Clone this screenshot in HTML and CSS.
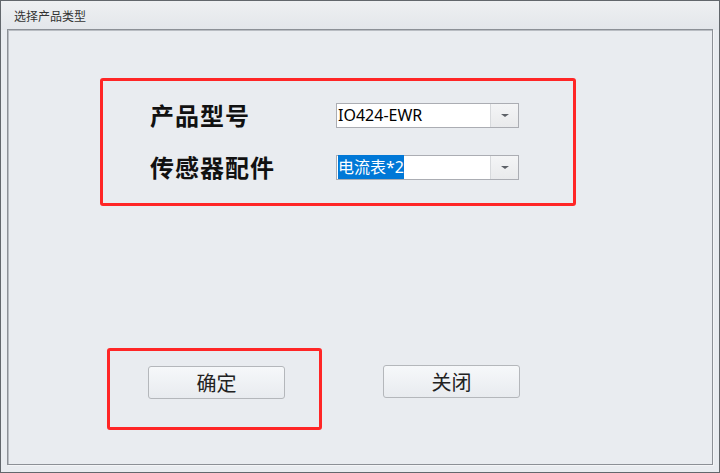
FILE: index.html
```html
<!DOCTYPE html>
<html lang="zh-CN">
<head>
    <meta charset="UTF-8">
    <meta name="viewport" content="width=device-width, initial-scale=1.0">
    <title>选择产品类型</title>
    <link rel="stylesheet" href="styles.css">
</head>
<body>

    <div class="window">
        <div class="titlebar">选择产品类型</div>

        <div class="panel">
            <!-- product selection -->
            <div class="mark mark-fields">
                <div class="field-row">
                    <span class="field-label">产品型号</span>
                    <div class="combo">
                        <span class="combo-text">IO424-EWR</span>
                        <span class="combo-btn"><i class="arrow"></i></span>
                    </div>
                </div>
                <div class="field-row">
                    <span class="field-label">传感器配件</span>
                    <div class="combo">
                        <span class="combo-text"><span class="selected">电流表*2</span></span>
                        <span class="combo-btn"><i class="arrow"></i></span>
                    </div>
                </div>
            </div>

            <div class="actions">
                <div class="mark mark-ok">
                    <button type="button" class="btn">确定</button>
                </div>
                <button type="button" class="btn btn-close">关闭</button>
            </div>
        </div>
    </div>

</body>
</html>
```

FILE: styles.css
```css
/* Dialog window */
body {
    margin: 0;
    font-family: "Noto Sans", "Noto Sans CJK SC", sans-serif;
}

.window {
    width: 720px;
    height: 473px;
    box-sizing: border-box;
    border: 1px solid #62676c;
    background: linear-gradient(#eef0f2, #e3e6ea 29px, #e9ecf0 29px);
    display: flex;
    flex-direction: column;
}

.titlebar {
    height: 28px;
    padding-left: 13px;
    font-size: 12px;
    line-height: 30px;
    color: #333;
    font-family: "Noto Sans CJK SC", sans-serif;
}

.panel {
    flex: 1;
    margin: 0 6px 7px 6px;
    border: 1px solid #8c9096;
    box-shadow: inset 1px 1px 0 #b9bdc3, 1px 1px 0 #f4f5f7;
    background: #e9ecf0;
}

/* red highlight boxes */
.mark {
    border: 3px solid #ff2626;
    border-radius: 3px;
    box-sizing: border-box;
}

.mark-fields {
    width: 476px;
    height: 128px;
    margin: 48px 0 0 92px;
    padding: 22px 0 0 47px;
}

.field-row {
    display: flex;
    align-items: center;
    height: 25px;
    margin-bottom: 27px;
}

.field-label {
    width: 186px;
    margin-top: -3px;
    font-family: "Noto Sans CJK SC", serif;
    font-size: 24px;
    font-weight: 700;
    color: #111;
    letter-spacing: 1px;
}

.combo {
    display: flex;
    width: 183px;
    height: 25px;
    box-sizing: border-box;
    border: 1px solid #abadb3;
    background: #fff;
}

.combo-text {
    flex: 1;
    padding-left: 1px;
    font-size: 16px;
    line-height: 23px;
    color: #000;
}

.selected {
    background: #0078d7;
    color: #fff;
    padding: 1px 0;
}

.combo-btn {
    width: 27px;
    border-left: 1px solid #d7d9dc;
    background: linear-gradient(#f4f5f6, #e9eaec);
    display: flex;
    align-items: center;
    justify-content: center;
}

.arrow {
    width: 0;
    height: 0;
    border-left: 4px solid transparent;
    border-right: 4px solid transparent;
    border-top: 3px solid #5d6167;
}

/* buttons */
.actions {
    display: flex;
    align-items: flex-start;
    margin: 142px 0 0 99px;
}

.mark-ok {
    width: 215px;
    height: 82px;
    padding: 15px 0 0 38px;
}

.btn {
    width: 137px;
    height: 33px;
    border: 1px solid #b4b7bb;
    border-radius: 3px;
    background: linear-gradient(#f6f8fa, #e8ebef);
    font-family: "Noto Sans CJK SC", serif;
    font-size: 20px;
    color: #222;
    padding: 0;
}

.btn-close {
    margin: 17px 0 0 61px;
}
```
